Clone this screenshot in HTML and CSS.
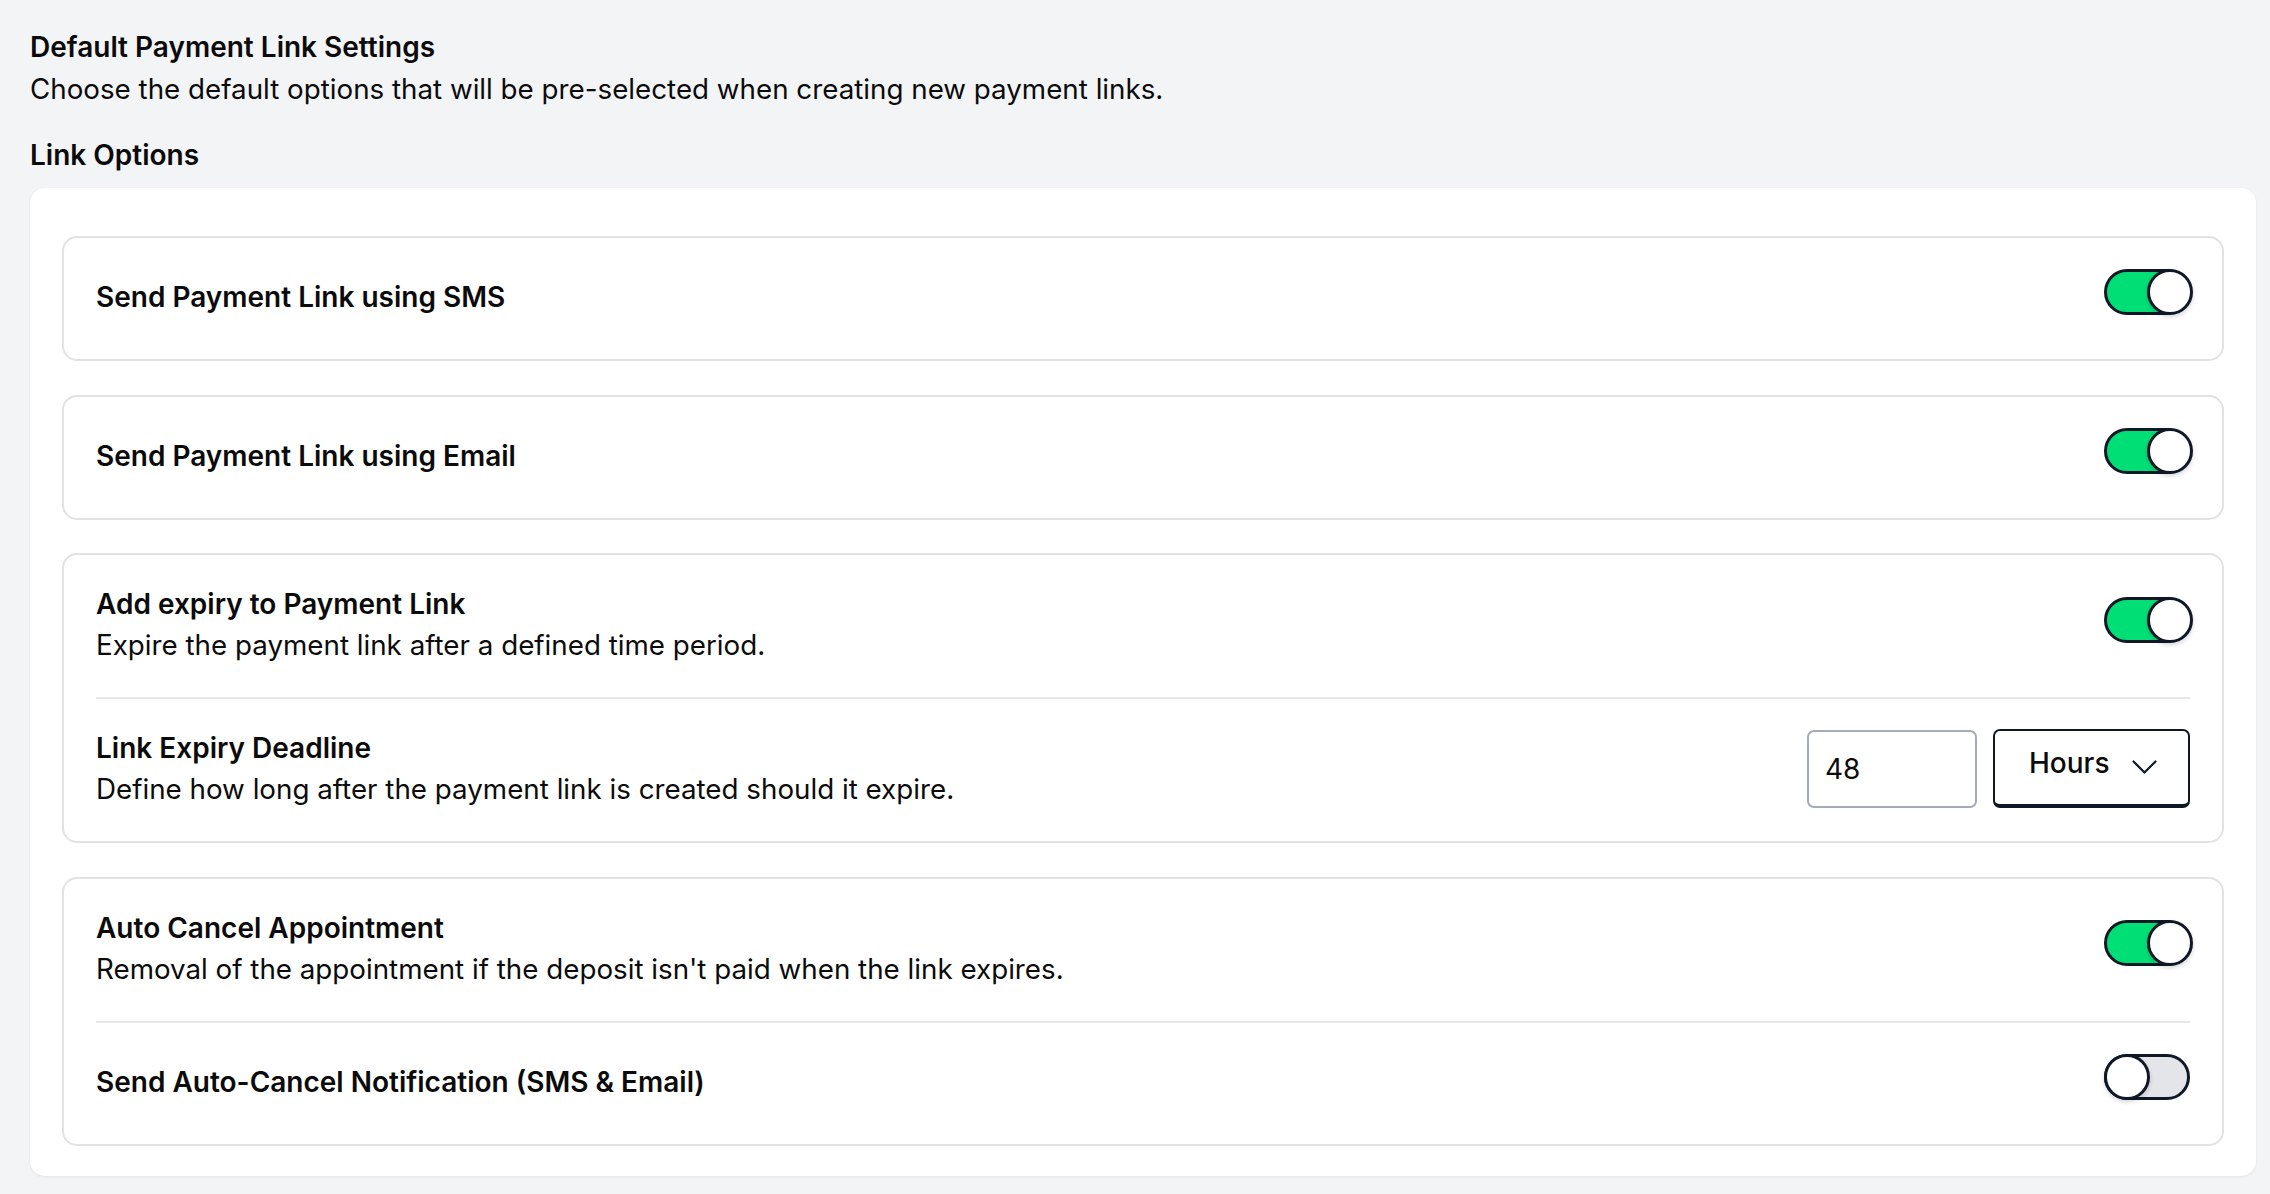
FILE: index.html
```html
<!DOCTYPE html>
<html>
	<head>
		<meta charset="utf-8" lang="en" />
		<title>Default Payment Link Settings</title>

		<link rel="stylesheet" href="styles.css">
	</head>

	<body>
		<main class="page">
			<h1 class="intro-title">Default Payment Link Settings</h1>
			<p class="intro-text">Choose the default options that will be pre-selected when creating new payment links.</p>

			<h2 class="section-title">Link Options</h2>

			<section class="card">
				<div class="option-box">
					<div class="option-row">
						<div class="option-text">
							<h3 class="option-title">Send Payment Link using SMS</h3>
						</div>
						<span class="toggle is-on"><span class="toggle-knob"></span></span>
					</div>
				</div>

				<div class="option-box">
					<div class="option-row">
						<div class="option-text">
							<h3 class="option-title">Send Payment Link using Email</h3>
						</div>
						<span class="toggle is-on"><span class="toggle-knob"></span></span>
					</div>
				</div>

				<div class="option-box">
					<div class="option-row">
						<div class="option-text">
							<h3 class="option-title">Add expiry to Payment Link</h3>
							<p class="option-desc">Expire the payment link after a defined time period.</p>
						</div>
						<span class="toggle is-on"><span class="toggle-knob"></span></span>
					</div>
					<div class="option-row">
						<div class="option-text">
							<h3 class="option-title">Link Expiry Deadline</h3>
							<p class="option-desc">Define how long after the payment link is created should it expire.</p>
						</div>
						<div class="expiry-controls">
							<input class="number-input" type="text" value="48">
							<button class="select" type="button">
								<span class="select-label">Hours</span>
								<svg class="chevron" width="25" height="14" viewBox="0 0 25 14">
									<polyline points="1.5,1.5 12.5,12.5 23.5,1.5" fill="none" stroke="#101828" stroke-width="2.2" stroke-linecap="round" stroke-linejoin="round" />
								</svg>
							</button>
						</div>
					</div>
				</div>

				<div class="option-box">
					<div class="option-row">
						<div class="option-text">
							<h3 class="option-title">Auto Cancel Appointment</h3>
							<p class="option-desc">Removal of the appointment if the deposit isn't paid when the link expires.</p>
						</div>
						<span class="toggle is-on"><span class="toggle-knob"></span></span>
					</div>
					<div class="option-row">
						<div class="option-text">
							<h3 class="option-title">Send Auto-Cancel Notification (SMS &amp; Email)</h3>
						</div>
						<span class="toggle"><span class="toggle-knob"></span></span>
					</div>
				</div>
			</section>
		</main>
	</body>
</html>
```

FILE: styles.css
```css
body {
	background: #f3f4f6;
	color: #0b0b0c;
	font-family: Inter, "Noto Sans", sans-serif;
	margin: 0;
	padding: 0;
}
h1,
h2,
h3,
p { margin: 0; }


/* Page header */
.page { padding: 27px 14px 19px 30px; }
.intro-title,
.section-title {
	font-size: 28px;
	font-weight: 600;
	line-height: 40px;
}
.intro-text {
	font-size: 27.75px;
	line-height: 40px;
	margin-top: 2px;
}
.section-title { margin: 26px 0 13px; }


/* Card */
.card {
	background: #fff;
	border-radius: 15px;
	box-shadow: 0 1px 3px rgba(16, 24, 40, 0.08);
	display: flex;
	flex-direction: column;
	gap: 33.5px;
	padding: 48px 32px 30px;
}
.option-box {
	border: 2px solid #e2e2e3;
	border-radius: 15px;
	padding: 0 32px;
}
.option-row {
	align-items: center;
	display: flex;
	gap: 24px;
	justify-content: space-between;
	padding: 29px 0 32px;
}
.option-row + .option-row { border-top: 2px solid #e5e6e9; }
.option-title {
	font-size: 28px;
	font-weight: 600;
	line-height: 40px;
}
.option-desc {
	font-size: 27.75px;
	line-height: 40px;
	margin-top: 1px;
}


/* Toggle */
.toggle {
	background: #e4e5e9;
	border: 3px solid #101828;
	border-radius: 23px;
	box-sizing: border-box;
	flex-shrink: 0;
	height: 46px;
	margin: 2px 0 12px;
	position: relative;
	width: 86px;
}
.toggle.is-on { background: #00df76; }
.toggle-knob {
	background: #fff;
	border: 3px solid #101828;
	border-radius: 50%;
	box-shadow: 0 2px 4px rgba(16, 24, 40, 0.18);
	box-sizing: border-box;
	height: 46px;
	left: -3px;
	position: absolute;
	top: -3px;
	width: 46px;
}
.toggle.is-on .toggle-knob { left: 40px; }


/* Expiry inputs */
.expiry-controls {
	display: flex;
	flex-shrink: 0;
	gap: 16px;
}
.number-input {
	border: 2px solid #a4abb9;
	border-radius: 7px;
	box-sizing: border-box;
	color: #0b0b0c;
	font-family: Inter, "Noto Sans", sans-serif;
	font-size: 28px;
	height: 78px;
	padding: 0 16px;
	width: 170px;
}
.select {
	align-items: center;
	background: #fff;
	border: 2px solid #101828;
	border-bottom-width: 4px;
	border-radius: 7px;
	box-sizing: border-box;
	color: #0b0b0c;
	display: flex;
	font-family: Inter, "Noto Sans", sans-serif;
	font-size: 28px;
	font-weight: 500;
	gap: 22px;
	height: 79px;
	margin-top: -1px;
	padding: 0 30px 0 34px;
	width: 197px;
}
.select-label { margin-bottom: 8px; }
.chevron { flex-shrink: 0; }
```
